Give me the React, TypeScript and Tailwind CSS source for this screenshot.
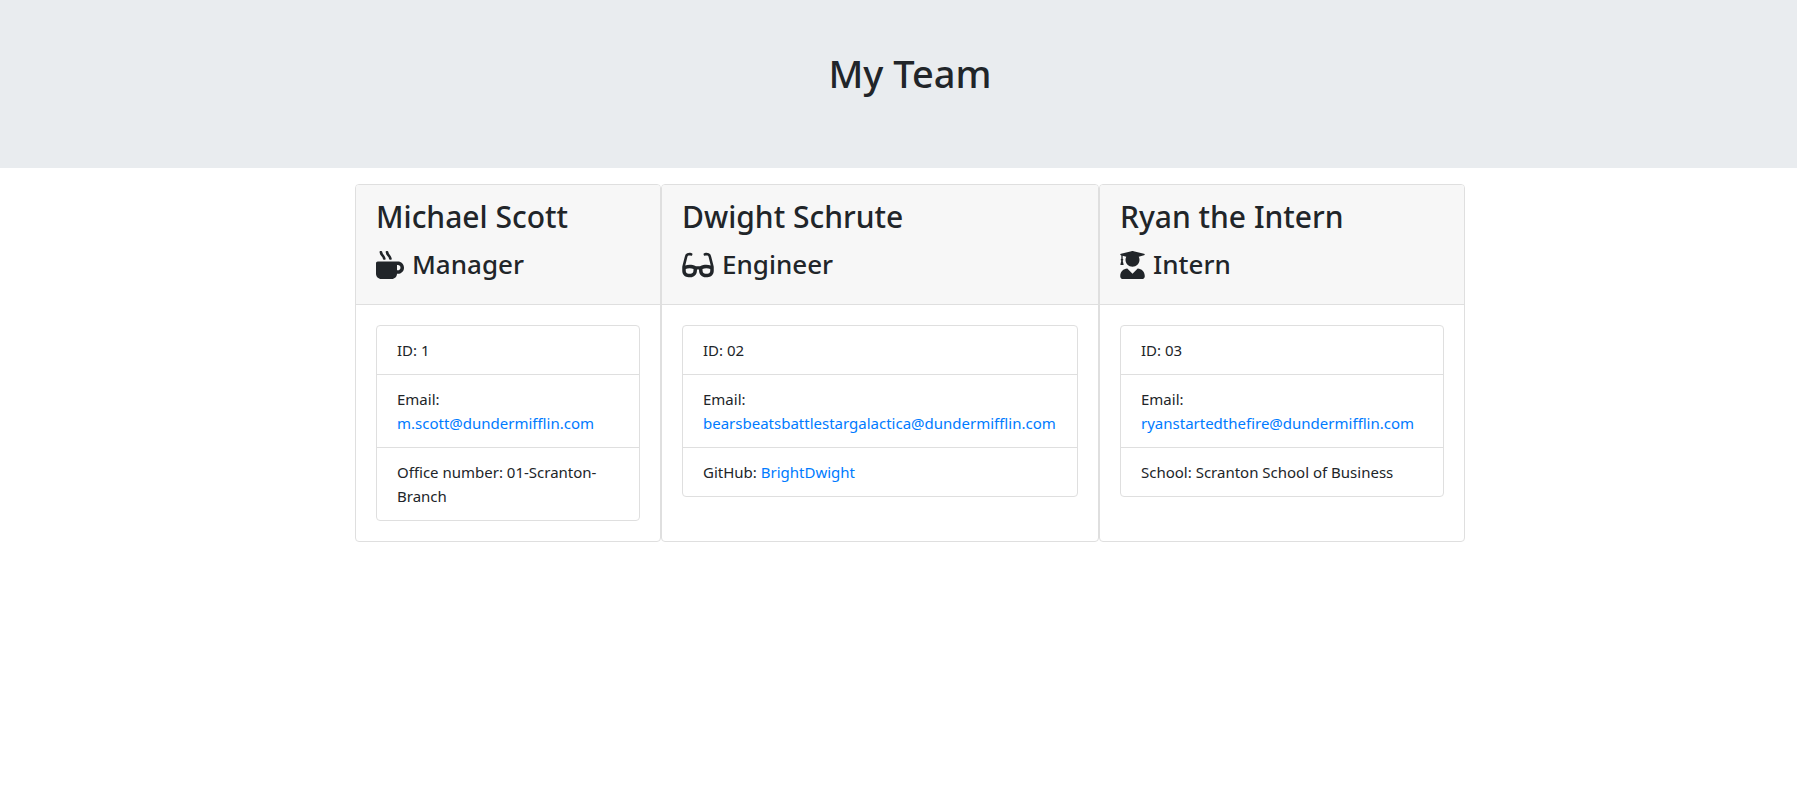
import type { ReactNode } from "react";
import { FaGlasses, FaMugHot, FaUserGraduate } from "react-icons/fa";

type Member = {
  name: string;
  role: string;
  icon: ReactNode;
  id: string;
  email: string;
  detail: ReactNode;
};

const linkClass = "text-[#007bff] hover:underline";

const members: Member[] = [
  {
    name: "Michael Scott",
    role: "Manager",
    icon: <FaMugHot aria-hidden className="size-7" />,
    id: "1",
    email: "m.scott@dundermifflin.com",
    detail: "Office number: 01-Scranton-Branch",
  },
  {
    name: "Dwight Schrute",
    role: "Engineer",
    icon: <FaGlasses aria-hidden className="h-7 w-8" />,
    id: "02",
    email: "bearsbeatsbattlestargalactica@dundermifflin.com",
    detail: (
      <>
        GitHub:{" "}
        <a className={linkClass} href="https://github.com/BrightDwight">
          BrightDwight
        </a>
      </>
    ),
  },
  {
    name: "Ryan the Intern",
    role: "Intern",
    icon: <FaUserGraduate aria-hidden className="h-7 w-[25px]" />,
    id: "03",
    email: "ryanstartedthefire@dundermifflin.com",
    detail: "School: Scranton School of Business",
  },
];

function MemberCard({ member }: { member: Member }) {
  return (
    <article className="flex flex-col overflow-hidden rounded border border-[#dfdfdf] bg-white">
      <header className="border-b border-[#dfdfdf] bg-[#f7f7f7] px-5 pt-[13px] pb-[19px]">
        <h2 className="text-[30px] leading-[38px] font-medium">{member.name}</h2>
        <h3 className="mt-2 flex items-center gap-2 text-[26px] leading-[41px] font-medium">
          {member.icon}
          {member.role}
        </h3>
      </header>
      <div className="p-5">
        <ul className="divide-y divide-[#dfdfdf] rounded border border-[#dfdfdf] text-[15px] leading-6">
          <li className="px-5 py-3">ID: {member.id}</li>
          <li className="px-5 py-3">
            Email:{" "}
            <a className={`${linkClass} block`} href={`mailto:${member.email}`}>
              {member.email}
            </a>
          </li>
          <li className="px-5 py-3">{member.detail}</li>
        </ul>
      </div>
    </article>
  );
}

export default function App() {
  return (
    <div className="font-['Noto_Sans','Open_Sans',sans-serif] text-[#212529]">
      <header className="mb-4 bg-[#e9ecef] pt-12 pb-[70px] pl-[23px] text-center">
        <h1 className="text-[38px] leading-[50px] font-medium">My Team</h1>
      </header>
      <main className="pl-[23px]">
        <div className="mx-auto grid max-w-[1110px] grid-cols-1 md:grid-cols-[306fr_438fr_366fr]">
          {members.map((member) => (
            <MemberCard key={member.id} member={member} />
          ))}
        </div>
      </main>
    </div>
  );
}
